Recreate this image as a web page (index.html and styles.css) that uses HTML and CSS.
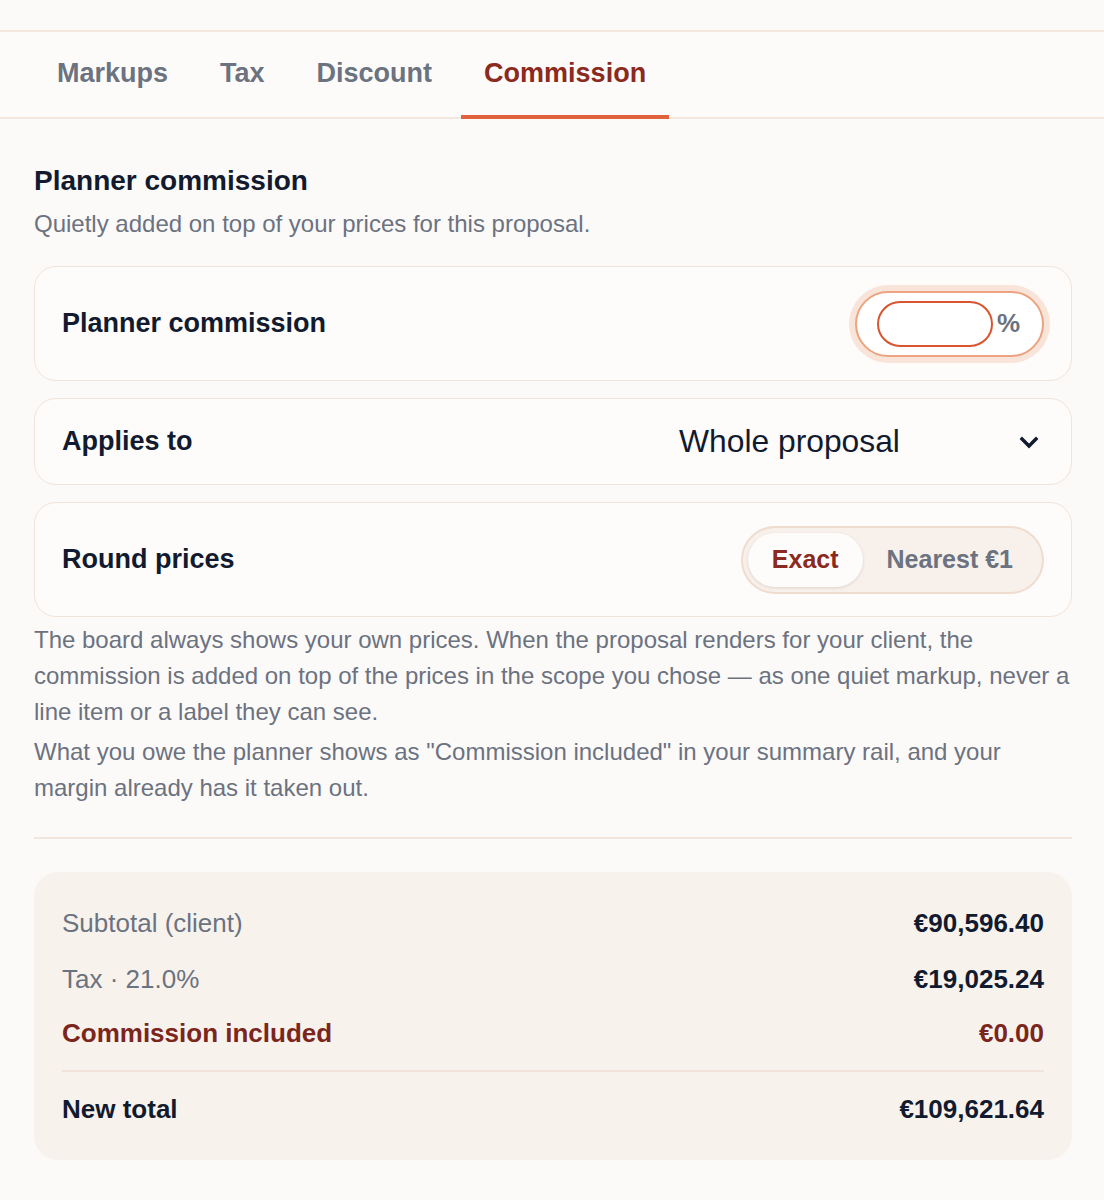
FILE: index.html
```html
<!DOCTYPE html>
<html lang="en">
<head>
<meta charset="utf-8">
<title>Commission</title>
<link rel="stylesheet" href="styles.css">
</head>
<body>
<div class="page">
  <nav class="tabs">
    <div class="tab">Markups</div>
    <div class="tab">Tax</div>
    <div class="tab">Discount</div>
    <div class="tab active">Commission</div>
  </nav>
  <main class="content">
    <h2 class="title">Planner commission</h2>
    <p class="subtitle">Quietly added on top of your prices for this proposal.</p>

    <div class="card">
      <span class="label">Planner commission</span>
      <div class="pct-wrap">
        <div class="pct-input"></div>
        <span class="pct">%</span>
      </div>
    </div>

    <div class="card card-short">
      <span class="label">Applies to</span>
      <div class="select">
        <span class="select-value">Whole proposal</span>
        <svg class="chev" width="20" height="14" viewBox="0 0 20 14"><path d="M3 4 L10 11 L17 4" fill="none" stroke="#111a2e" stroke-width="3.4" stroke-linecap="square"/></svg>
      </div>
    </div>

    <div class="card">
      <span class="label">Round prices</span>
      <div class="segmented">
        <div class="seg seg-on">Exact</div>
        <div class="seg">Nearest €1</div>
      </div>
    </div>

    <div class="help">
      <p>The board always shows your own prices. When the proposal renders for your client, the commission is added on top of the prices in the scope you chose — as one quiet markup, never a line item or a label they can see.</p>
      <p>What you owe the planner shows as "Commission included" in your summary rail, and your margin already has it taken out.</p>
    </div>

    <hr class="divider">

    <section class="summary">
      <div class="row"><span class="muted">Subtotal (client)</span><span class="val">€90,596.40</span></div>
      <div class="row"><span class="muted">Tax · 21.0%</span><span class="val">€19,025.24</span></div>
      <div class="row commission"><span class="strong">Commission included</span><span class="val">€0.00</span></div>
      <div class="sum-line"></div>
      <div class="row total"><span class="strong">New total</span><span class="val">€109,621.64</span></div>
    </section>
  </main>
</div>
</body>
</html>
```

FILE: styles.css
```css
* { box-sizing: border-box; }
html, body { margin: 0; padding: 0; }
body {
  background: #fcfaf8;
  font-family: "Liberation Sans", Arial, sans-serif;
  color: #111a2e;
}
.page { padding-top: 30px; }
.tabs {
  display: flex;
  gap: 6px;
  padding: 0 34px;
  border-top: 2px solid #f4e7de;
  border-bottom: 2px solid #f4e7de;
  background: #fdfbfa;
}
.tab {
  padding: 0 23px;
  height: 87px;
  display: flex;
  align-items: center;
  font-size: 27px;
  font-weight: 700;
  color: #6b7280;
  margin-bottom: -2px;
  border-bottom: 4px solid transparent;
}
.tab.active {
  color: #8a2a20;
  border-bottom-color: #e0613b;
}
.content { padding: 45px 32px 40px 34px; }
.title {
  margin: 0;
  font-size: 28px;
  font-weight: 700;
  line-height: 34px;
  color: #111a2e;
}
.subtitle {
  margin: 10px 0 26px;
  font-size: 24px;
  line-height: 32px;
  color: #6b7280;
}
.card {
  display: flex;
  align-items: center;
  justify-content: space-between;
  height: 115px;
  padding: 0 27px 0 27px;
  border: 1.5px solid #f2e3d8;
  border-radius: 22px;
  background: #fdfcfb;
}
.card + .card { margin-top: 17px; }
.card-short { height: 87px; padding-right: 32px; }
.label {
  font-size: 27px;
  font-weight: 700;
  color: #111a2e;
}
.pct-wrap {
  display: flex;
  align-items: center;
  gap: 4px;
  height: 66px;
  padding: 0 22px 0 20px;
  border: 2px solid #eba47f;
  border-radius: 33px;
  background: #fff;
  box-shadow: 0 0 0 6px #f9e4d9;
}
.pct-input {
  width: 116px;
  height: 46px;
  border: 2px solid #d9552f;
  border-radius: 23px;
  background: #fff;
}
.pct {
  font-size: 26px;
  font-weight: 700;
  color: #6b7280;
}
.select {
  display: flex;
  align-items: center;
}
.select-value {
  font-size: 31.8px;
  color: #111a2e;
  width: 340px;
}
.chev { display: block; }
.segmented {
  display: flex;
  align-items: center;
  height: 68px;
  padding: 5px;
  border: 2px solid #efdccf;
  border-radius: 34px;
  background: #f7f0eb;
}
.seg {
  height: 100%;
  display: flex;
  align-items: center;
  padding: 0 24px;
  border-radius: 28px;
  font-size: 25px;
  font-weight: 700;
  color: #6b7280;
}
.seg-on {
  background: #fefcfb;
  color: #8a2a20;
  box-shadow: 0 1px 3px rgba(120, 80, 60, 0.18);
}
.help {
  margin-top: 5px;
  font-size: 24px;
  line-height: 36px;
  color: #6b7280;
}
.help p { margin: 0 0 4px; }
.divider {
  border: 0;
  height: 2px;
  background: #f2e5dc;
  margin: 31px 0 33px;
}
.summary {
  background: #f8f2ed;
  border-radius: 24px;
  padding: 23px 28px 23px;
}
.row {
  display: flex;
  justify-content: space-between;
  align-items: center;
  padding: 10px 0;
  line-height: 36px;
  font-size: 26px;
}
.row.commission { padding-top: 8px; }
.muted { color: #6b7280; }
.strong { font-weight: 700; color: #111a2e; }
.val { font-weight: 700; color: #111a2e; }
.commission .strong, .commission .val { color: #7b261d; }
.sum-line {
  height: 2px;
  background: #f1e3d9;
  margin: 9px 0 9px;
}
```
